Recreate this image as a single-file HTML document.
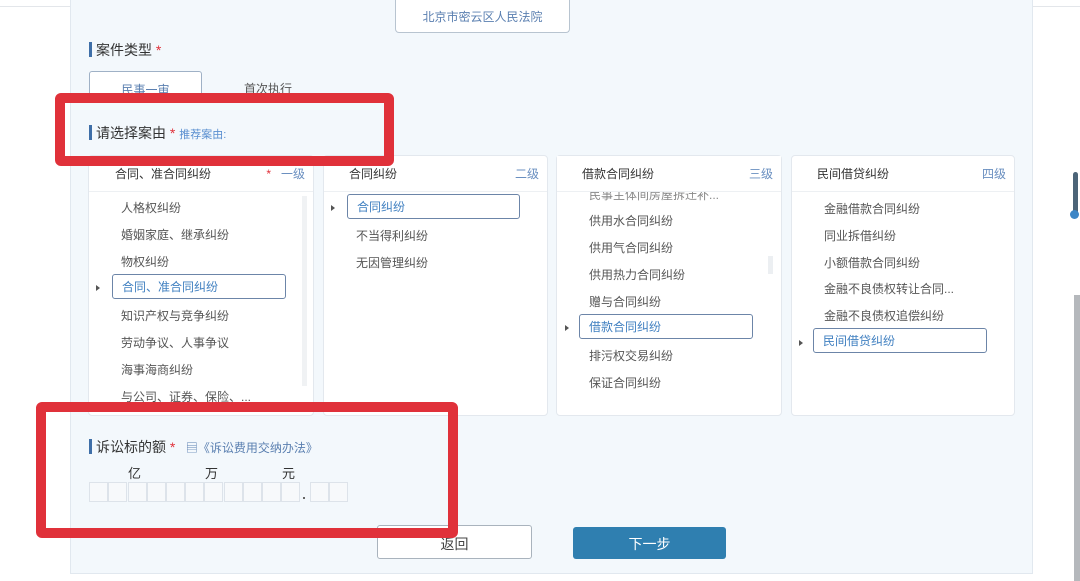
<!DOCTYPE html>
<html><head><meta charset="utf-8"><style>
*{margin:0;padding:0;box-sizing:border-box}
body{width:1080px;height:581px;background:#fff;position:relative;overflow:hidden;font-family:"Liberation Sans","Noto Sans CJK SC",sans-serif;color:#444;font-size:12px}
.abs{position:absolute}
.main{left:70px;top:0;width:963px;height:574px;background:#f3f8fc;border:1px solid #e1e8ef;border-top:none}
.topline{left:0;top:6px;width:1080px;height:1px;background:#e3e6ea}
.title{font-size:14px;color:#333}
.title:before{content:"";position:absolute;left:-7px;top:2px;width:3px;height:15px;background:#3f6fa8}
.star{color:#e0313a}
.panel{background:#fff;border:1px solid #e3e8ee;border-radius:4px}
.ph{position:absolute;left:0;right:0;top:0;height:36px;border-bottom:1px solid #edf0f3;font-size:12px;color:#333}
.ph .l{position:absolute;left:25px;top:9px}
.ph .r{position:absolute;right:8px;top:9px;color:#6a8fc0;font-size:12px}
.it{position:absolute;font-size:12px;color:#555;margin-top:-2px}
.sel{position:absolute;border:1px solid #6c85a8;border-radius:3px;height:25px;color:#3f7fc0;padding:3px 0 0 9px;background:#fff;margin-top:-1px}
.tri{position:absolute;width:0;height:0;border-left:4px solid #555;border-top:3px solid transparent;border-bottom:3px solid transparent}
.red{border:10px solid #e0313a;border-radius:6px}
.cell{position:absolute;top:482px;width:19px;height:20px;border:1px solid #dde3ea;background:#f7f9fb}
.btn{border-radius:3px;text-align:center;font-size:14px}
</style></head><body>
<div class="abs topline"></div>
<div class="abs main"></div>
<div class="abs" style="left:395px;top:0;width:175px;height:33px;border:1px solid #b8c4d0;border-top:none;border-radius:0 0 4px 4px;background:#fff;color:#5a7fb0;font-size:12px;text-align:center;padding-top:8px">北京市密云区人民法院</div>
<div class="abs title" style="left:96px;top:40px">案件类型 <span class="star">*</span></div>
<div class="abs" style="left:89px;top:71px;width:113px;height:30px;border:1px solid #9fb1c6;border-radius:3px;background:#fff;color:#5a7fb0;text-align:center;padding-top:9px">民事一审</div>
<div class="abs" style="left:244px;top:80px;color:#555">首次执行</div>
<div class="abs title" style="left:96px;top:123px">请选择案由 <span class="star">*</span> <span style="color:#5a8fd0;font-size:11px">推荐案由:</span></div>

<div class="abs panel" style="left:88px;top:155px;width:226px;height:261px">
 <div class="ph"><span class="l" style="left:26px">合同、准合同纠纷</span><span class="r"><span class="star">*</span>&nbsp;&nbsp; 一级</span></div>
 <div class="it" style="left:32px;top:45px">人格权纠纷</div>
 <div class="it" style="left:32px;top:72px">婚姻家庭、继承纠纷</div>
 <div class="it" style="left:32px;top:99px">物权纠纷</div>
 <div class="tri" style="left:7px;top:129px"></div>
 <div class="sel" style="left:23px;top:119px;width:174px">合同、准合同纠纷</div>
 <div class="it" style="left:32px;top:153px">知识产权与竞争纠纷</div>
 <div class="it" style="left:32px;top:180px">劳动争议、人事争议</div>
 <div class="it" style="left:32px;top:207px">海事海商纠纷</div>
 <div class="it" style="left:32px;top:234px">与公司、证券、保险、...</div>
 <div class="abs" style="left:213px;top:40px;width:5px;height:190px;background:#f0f2f4"></div>
</div>
<div class="abs panel" style="left:323px;top:155px;width:225px;height:261px">
 <div class="ph"><span class="l">合同纠纷</span><span class="r">二级</span></div>
 <div class="tri" style="left:7px;top:49px"></div>
 <div class="sel" style="left:23px;top:39px;width:173px">合同纠纷</div>
 <div class="it" style="left:32px;top:73px">不当得利纠纷</div>
 <div class="it" style="left:32px;top:100px">无因管理纠纷</div>
</div>
<div class="abs panel" style="left:556px;top:155px;width:226px;height:261px">
 <div class="ph" style="z-index:2;background:#fff"><span class="l">借款合同纠纷</span><span class="r">三级</span></div>
 <div class="it" style="left:32px;top:32px;color:#888">民事主体间房屋拆迁补...</div>
 <div class="it" style="left:32px;top:58px">供用水合同纠纷</div>
 <div class="it" style="left:32px;top:85px">供用气合同纠纷</div>
 <div class="it" style="left:32px;top:112px">供用热力合同纠纷</div>
 <div class="it" style="left:32px;top:139px">赠与合同纠纷</div>
 <div class="tri" style="left:8px;top:169px"></div>
 <div class="sel" style="left:22px;top:159px;width:174px">借款合同纠纷</div>
 <div class="it" style="left:32px;top:193px">排污权交易纠纷</div>
 <div class="it" style="left:32px;top:220px">保证合同纠纷</div>
 <div class="abs" style="left:211px;top:100px;width:5px;height:18px;background:#eceff2"></div>
</div>
<div class="abs panel" style="left:791px;top:155px;width:224px;height:261px">
 <div class="ph"><span class="l">民间借贷纠纷</span><span class="r">四级</span></div>
 <div class="it" style="left:32px;top:46px">金融借款合同纠纷</div>
 <div class="it" style="left:32px;top:73px">同业拆借纠纷</div>
 <div class="it" style="left:32px;top:100px">小额借款合同纠纷</div>
 <div class="it" style="left:32px;top:126px">金融不良债权转让合同...</div>
 <div class="it" style="left:32px;top:153px">金融不良债权追偿纠纷</div>
 <div class="tri" style="left:7px;top:184px"></div>
 <div class="sel" style="left:21px;top:173px;width:174px">民间借贷纠纷</div>
</div>

<div class="abs title" style="left:96px;top:437px">诉讼标的额 <span class="star">*</span> <span style="color:#5a7fb0;font-size:12px">&nbsp;&nbsp;▤《诉讼费用交纳办法》</span></div>
<div class="abs" style="left:128px;top:463px;font-size:13px;color:#333">亿</div>
<div class="abs" style="left:205px;top:463px;font-size:13px;color:#333">万</div>
<div class="abs" style="left:282px;top:463px;font-size:13px;color:#333">元</div>
<div class="cell" style="left:89px"></div><div class="cell" style="left:108px"></div><div class="cell" style="left:128px"></div><div class="cell" style="left:147px"></div><div class="cell" style="left:166px"></div><div class="cell" style="left:185px"></div><div class="cell" style="left:204px"></div><div class="cell" style="left:224px"></div><div class="cell" style="left:243px"></div><div class="cell" style="left:262px"></div><div class="cell" style="left:281px"></div>
<div class="abs" style="left:303px;top:497px;width:2px;height:2px;background:#666"></div>
<div class="cell" style="left:310px"></div><div class="cell" style="left:329px"></div>

<div class="abs btn" style="left:377px;top:525px;width:155px;height:34px;border:1px solid #a9b3bd;background:#fff;color:#444;padding-top:8px">返回</div>
<div class="abs btn" style="left:573px;top:527px;width:153px;height:32px;background:#2f7fb0;color:#fff;padding-top:7px">下一步</div>

<div class="abs red" style="left:55px;top:93px;width:339px;height:73px"></div>
<div class="abs red" style="left:36px;top:402px;width:422px;height:136px"></div>

<div class="abs" style="left:1073px;top:172px;width:5px;height:46px;background:#4c6478;border-radius:3px"></div>
<div class="abs" style="left:1070px;top:210px;width:9px;height:9px;background:#3d86c6;border-radius:50%"></div>
<div class="abs" style="left:1074px;top:295px;width:6px;height:286px;background:#b5b8bc"></div>
</body></html>
